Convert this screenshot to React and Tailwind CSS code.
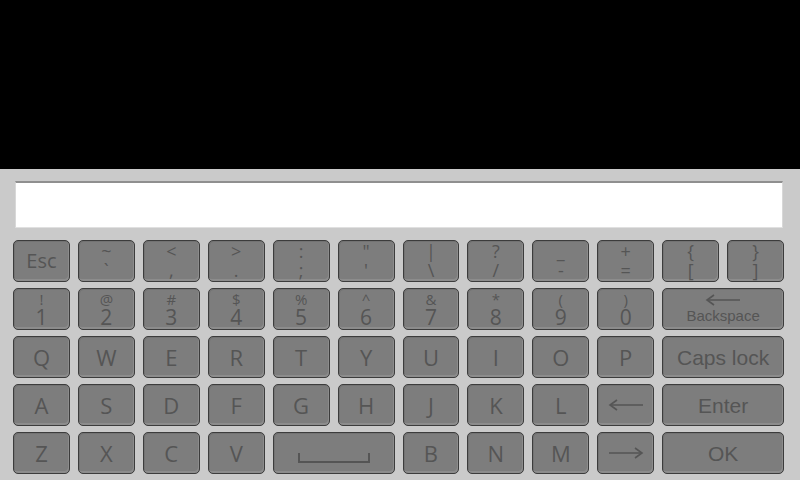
import React from 'react';

const keyBase =
    "flex items-center justify-center rounded-[5px] border border-[#3c3c3c] bg-[#7d7d7d] text-[#555555] shadow-[inset_-1px_-2px_0_#8c8c8c,inset_1px_1px_0_#737373] select-none";

const sans = { fontFamily: '"Open Sans", "Noto Sans", sans-serif' };
const arial = { fontFamily: '"Liberation Sans", Arial, sans-serif' };

const rowOne = [
    ['~', '`'], ['<', ','], ['>', '.'], [':', ';'], ['"', "'"], ['|', '\\'],
    ['?', '/'], ['_', '-'], ['+', '='], ['{', '['], ['}', ']'],
];

const rowTwo = [
    ['!', '1'], ['@', '2'], ['#', '3'], ['$', '4'], ['%', '5'],
    ['^', '6'], ['&', '7'], ['*', '8'], ['(', '9'], [')', '0'],
];

const Arrow = ({ dir }) => (
    <svg width="36" height="12" viewBox="0 0 36 12" fill="none" stroke="#555555" strokeWidth="1.6">
        {dir === 'left' ? (
            <>
                <line x1="2" y1="6" x2="35" y2="6" />
                <polyline points="9,1 2,6 9,11" />
            </>
        ) : (
            <>
                <line x1="1" y1="6" x2="34" y2="6" />
                <polyline points="27,1 34,6 27,11" />
            </>
        )}
    </svg>
);

const Letter = ({ children }) => (
    <div className={keyBase}>
        <span className="text-[22px] leading-none" style={sans}>{children}</span>
    </div>
);

const Wide = ({ children, span = 'col-span-2' }) => (
    <div className={`${keyBase} ${span}`}>
        <span className="text-[21px] leading-none" style={arial}>{children}</span>
    </div>
);

export default function App() {
    return (
        <div className="w-[800px] h-[480px] flex flex-col bg-black overflow-hidden">
            <div className="h-[169px] bg-black" />

            <div className="flex-1 bg-[#cacaca] pl-[13px] pr-[16px] pt-[12px]">
                {/* text field */}
                <div className="ml-[2px] mr-[1px] h-[47px] bg-white border-t-2 border-[#8f8f8f] border-x border-b border-x-[#d8d8d8] border-b-[#e0e0e0]" />

                {/* keys */}
                <div className="mt-[12px] grid grid-cols-12 gap-x-[8px] gap-y-[6px] auto-rows-[42px]">
                    <div className={keyBase}>
                        <span className="text-[20px] leading-none" style={sans}>Esc</span>
                    </div>
                    {rowOne.map(([top, bottom]) => (
                        <div key={top} className={`${keyBase} flex-col`} style={sans}>
                            <span className="text-[18px] leading-[19px]">{top}</span>
                            <span className="text-[18px] leading-[19px]">{bottom}</span>
                        </div>
                    ))}

                    {rowTwo.map(([top, bottom]) => (
                        <div key={bottom} className={`${keyBase} flex-col`} style={sans}>
                            <span className="text-[15px] leading-[16px]">{top}</span>
                            <span className="text-[21px] leading-[21px]">{bottom}</span>
                        </div>
                    ))}
                    <div className={`${keyBase} col-span-2 flex-col`}>
                        <Arrow dir="left" />
                        <span className="text-[15px] leading-[17px] mt-[1px]" style={arial}>Backspace</span>
                    </div>

                    {['Q', 'W', 'E', 'R', 'T', 'Y', 'U', 'I', 'O', 'P'].map((k) => (
                        <Letter key={k}>{k}</Letter>
                    ))}
                    <Wide>Caps lock</Wide>

                    {['A', 'S', 'D', 'F', 'G', 'H', 'J', 'K', 'L'].map((k) => (
                        <Letter key={k}>{k}</Letter>
                    ))}
                    <div className={keyBase}>
                        <Arrow dir="left" />
                    </div>
                    <Wide>Enter</Wide>

                    {['Z', 'X', 'C', 'V'].map((k) => (
                        <Letter key={k}>{k}</Letter>
                    ))}
                    <div className={`${keyBase} col-span-2 items-end pb-[10px]`}>
                        <div className="w-[72px] h-[10px] border-x-2 border-b-2 border-[#555555]" />
                    </div>
                    {['B', 'N', 'M'].map((k) => (
                        <Letter key={k}>{k}</Letter>
                    ))}
                    <div className={keyBase}>
                        <Arrow dir="right" />
                    </div>
                    <Wide>OK</Wide>
                </div>
            </div>
        </div>
    );
}
